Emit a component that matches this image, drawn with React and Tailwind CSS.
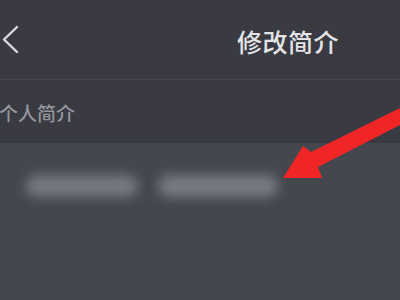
import React from 'react'

export default function App() {
  return (
    <div
      className="relative w-[400px] h-[300px] overflow-hidden bg-[#393a42] flex flex-col"
      style={{ fontFamily: '"Noto Sans CJK SC", "Noto Sans", sans-serif' }}
    >
      {/* header */}
      <div className="h-[80px] flex items-center border-b border-[#474850] shrink-0">
        <svg width="20" height="30" viewBox="0 0 20 30" className="ml-[1px]">
          <path d="M16 2 L3 14.5 L16 27" fill="none" stroke="#dcdcde" strokeWidth="2.4" strokeLinecap="round" strokeLinejoin="round" />
        </svg>
        <span className="ml-[216px] mt-[4px] text-[25px] leading-none font-medium text-[#e4e4e6] tracking-[0.5px]">修改简介</span>
      </div>

      {/* section label */}
      <div className="h-[63px] flex items-center shrink-0">
        <span className="ml-[-1px] mt-[2px] text-[19px] leading-none font-medium text-[#96979c]">个人简介</span>
      </div>

      {/* input area, text is blurred out */}
      <div className="flex-1 bg-[#45474e] pt-[32px]">
        <div className="flex items-center gap-[20px] pl-[26px]">
          <div className="h-[22px] w-[112px] rounded-full bg-[#77797f] blur-[6px]" />
          <div className="h-[22px] w-[120px] rounded-full bg-[#797b81] blur-[6px]" />
        </div>
      </div>

      {/* red arrow */}
      <svg className="absolute left-0 top-0" width="400" height="300" viewBox="0 0 400 300">
        <polygon
          points="402,107 311,152 303,146 283,178 322,178 318,167 402,124"
          fill="#f02626"
        />
      </svg>
    </div>
  )
}
